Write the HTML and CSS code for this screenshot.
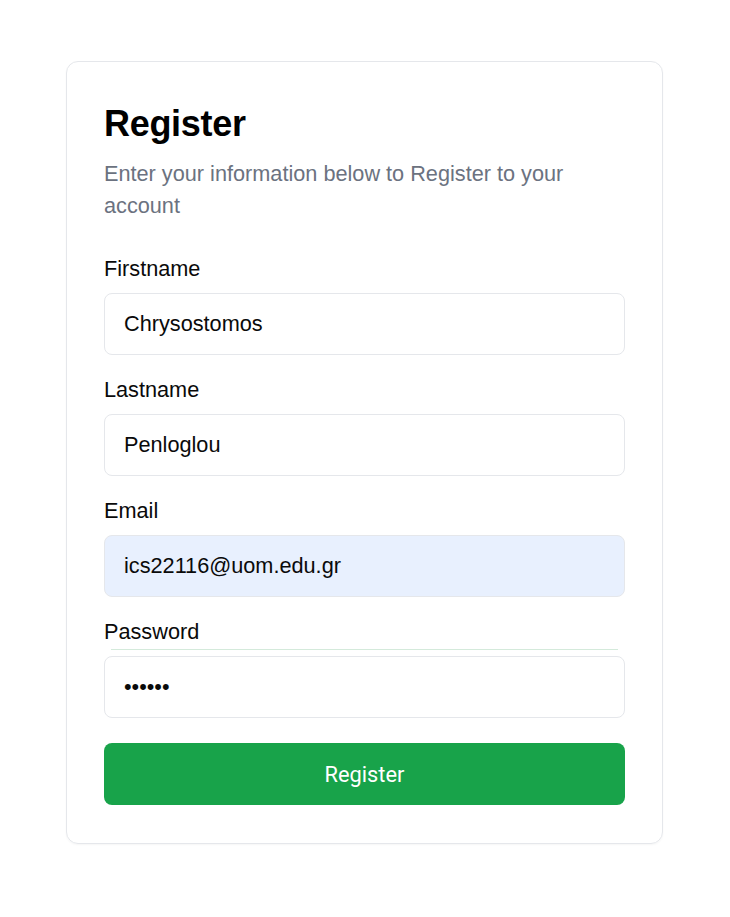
FILE: index.html
```html
<!DOCTYPE html>
<html lang="en">
<head>
<meta charset="utf-8">
<title>Register</title>
<link rel="stylesheet" href="styles.css">
</head>
<body>
<main class="page">
  <form class="card">
    <h1 class="title">Register</h1>
    <p class="subtitle">Enter your information below to Register to your account</p>
    <div class="field">
      <label class="label">Firstname</label>
      <div class="input">Chrysostomos</div>
    </div>
    <div class="field">
      <label class="label">Lastname</label>
      <div class="input">Penloglou</div>
    </div>
    <div class="field">
      <label class="label">Email</label>
      <div class="input input-filled">ics22116@uom.edu.gr</div>
    </div>
    <div class="field">
      <label class="label label-tight">Password</label>
      <div class="rule"></div>
      <div class="input input-pass">••••••</div>
    </div>
    <button type="button" class="btn">Register</button>
  </form>
</main>
</body>
</html>
```

FILE: styles.css
```css
* { box-sizing: border-box; }
html, body { margin: 0; padding: 0; background: #ffffff; }
body {
  font-family: "Liberation Sans", Arial, sans-serif;
  color: #0a0a0a;
  width: 730px;
  height: 917px;
}
.page {
  padding: 61px 0 0 66px;
}
.card {
  width: 597px;
  border: 1px solid #e5e7eb;
  border-radius: 12px;
  padding: 38px 37px 38px 37px;
  display: flex;
  flex-direction: column;
  box-shadow: 0 1px 2px rgba(0,0,0,0.04);
}
.title {
  margin: 0;
  font-size: 36px;
  line-height: 48px;
  font-weight: 700;
  letter-spacing: -0.3px;
  color: #000;
}
.subtitle {
  margin: 10px 0 33px;
  font-size: 21.7px;
  line-height: 32px;
  color: #6b7280;
}
.field {
  display: flex;
  flex-direction: column;
  margin-bottom: 21px;
}
.label {
  font-size: 21.7px;
  line-height: 28px;
  margin-bottom: 10px;
  color: #0a0a0a;
}
.label-tight { margin-bottom: 3px; }
.rule {
  height: 1px;
  margin: 0 7px 6px 7px;
  background: #d4eadb;
}
.input {
  height: 62px;
  border: 1px solid #e5e7eb;
  border-radius: 8px;
  padding: 0 19px;
  display: flex;
  align-items: center;
  font-size: 21.7px;
  color: #0a0a0a;
  background: #fff;
}
.input-filled { background: #e8f0fe; }
.input-pass { font-size: 21.7px; letter-spacing: 0; }
.btn {
  margin-top: 4px;
  height: 62px;
  border: none;
  border-radius: 8px;
  background: #18a34a;
  color: #ffffff;
  font-family: Roboto, "Liberation Sans", sans-serif;
  font-size: 21.8px;
  cursor: pointer;
}
```
